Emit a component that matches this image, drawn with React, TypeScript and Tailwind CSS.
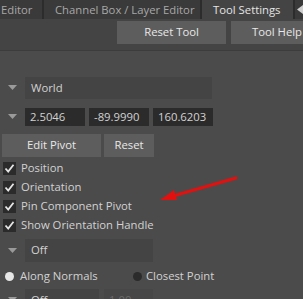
import React from "react";

const Tri = () => (
  <div className="w-[25px] flex justify-center">
    <svg width="9" height="6" viewBox="0 0 9 6">
      <path d="M0 0 L9 0 L4.5 5 Z" fill="#9a9a9a" />
    </svg>
  </div>
);

const Check = ({ label }: { label: string }) => (
  <div className="flex items-center h-[19px] pl-[3px] gap-[5px]">
    <div className="w-[13px] h-[13px] bg-[#2b2b2b] flex items-center justify-center">
      <svg width="11" height="11" viewBox="0 0 11 11">
        <path d="M1.5 5.5 L4.2 8.5 L9.5 1.8" stroke="#e6e6e6" strokeWidth="1.8" fill="none" />
      </svg>
    </div>
    <span>{label}</span>
  </div>
);

const App = () => {
  return (
    <div
      className="w-[303px] h-[299px] overflow-hidden bg-[#4b4b4b] text-[11.3px] text-[#d2d2d2] relative whitespace-nowrap"
      style={{ fontFamily: "'Open Sans', 'Noto Sans', sans-serif" }}
    >
      {/* tab bar */}
      <div className="flex h-[19px] bg-[#363636] items-stretch">
        <div className="w-[42px] bg-[#3a3a3a] pl-[1px] leading-[19px] text-[#a8a8a8]">Editor</div>
        <div className="w-[2px] bg-[#2c2c2c]" />
        <div className="w-[156px] bg-[#3a3a3a] pl-[11px] leading-[19px] text-[#a8a8a8]">
          Channel Box / Layer Editor
        </div>
        <div className="w-[2px] bg-[#2c2c2c]" />
        <div className="w-[91px] bg-[#444444] pl-[11px] leading-[19px] text-[#e4e4e4]">Tool Settings</div>
        <div className="w-[2px] bg-[#2c2c2c]" />
        <div className="flex-1 bg-[#3a3a3a] flex items-center pl-[2px]">
          <svg width="6" height="9" viewBox="0 0 6 9">
            <path d="M6 0 L6 9 L0 4.5 Z" fill="#cfcfcf" />
          </svg>
        </div>
      </div>

      {/* toolbar */}
      <div className="h-[32px] bg-[#444444] flex justify-end gap-[5px] pt-[2px] border-b border-[#3c3c3c]">
        <div className="w-[109px] h-[23px] bg-[#5d5d5d] flex items-center justify-center text-[#e8e8e8]">
          Reset Tool
        </div>
        <div className="w-[72px] h-[23px] bg-[#5d5d5d] flex items-center pl-[21px] text-[#e8e8e8]">
          Tool Help
        </div>
      </div>

      {/* panel */}
      <div className="flex flex-col pt-[26px]">
        <div className="flex items-center h-[22px]">
          <Tri />
          <div className="w-[187px] h-[22px] bg-[#444444] pl-[6px] flex items-center">World</div>
        </div>

        <div className="flex items-center h-[18px] mt-[9px]">
          <Tri />
          <div className="flex gap-[4px]">
            <div className="w-[60px] h-[18px] bg-[#2b2b2b] pl-[5px] flex items-center">2.5046</div>
            <div className="w-[60px] h-[18px] bg-[#2b2b2b] pl-[5px] flex items-center">-89.9990</div>
            <div className="w-[60px] h-[18px] bg-[#2b2b2b] pl-[5px] flex items-center">160.6203</div>
          </div>
        </div>

        <div className="flex gap-[3px] mt-[8px] pl-[2px]">
          <div className="w-[99px] h-[23px] bg-[#5d5d5d] flex items-center justify-center text-[#e8e8e8]">
            Edit Pivot
          </div>
          <div className="w-[50px] h-[23px] bg-[#5d5d5d] flex items-center justify-center text-[#e8e8e8]">
            Reset
          </div>
        </div>

        <div className="flex flex-col mt-[2px]">
          <Check label="Position" />
          <Check label="Orientation" />
          <Check label="Pin Component Pivot" />
          <Check label="Show Orientation Handle" />
        </div>

        <div className="flex items-center h-[23px] mt-[4px]">
          <Tri />
          <div className="w-[128px] h-[23px] bg-[#444444] pl-[6px] flex items-center">Off</div>
        </div>

        <div className="flex items-center h-[20px] mt-[4px]">
          <div className="w-[18px] flex justify-center">
            <div className="w-[9px] h-[9px] rounded-full bg-[#e6e6e6]" />
          </div>
          <span className="w-[110px] pl-[2px]">Along Normals</span>
          <div className="w-[18px] flex justify-center">
            <div className="w-[9px] h-[9px] rounded-full bg-[#2b2b2b]" />
          </div>
          <span>Closest Point</span>
        </div>

        <div className="flex items-center h-[22px] mt-[3px]">
          <Tri />
          <div className="w-[74px] h-[22px] bg-[#444444] pl-[6px] flex items-center">Off</div>
          <div className="w-[49px] h-[22px] bg-[#474747] ml-[5px] pl-[5px] flex items-center text-[#6a6a6a]">
            1.00
          </div>
        </div>
      </div>

      {/* red annotation arrow */}
      <svg className="absolute left-[155px] top-[172px]" width="90" height="34" viewBox="0 0 90 34">
        <line x1="81" y1="6" x2="18" y2="24" stroke="#e31010" strokeWidth="3" strokeLinecap="round" />
        <path d="M5 28 L19 18 L22 28 Z" fill="#e31010" />
      </svg>
    </div>
  );
};

export default App;
